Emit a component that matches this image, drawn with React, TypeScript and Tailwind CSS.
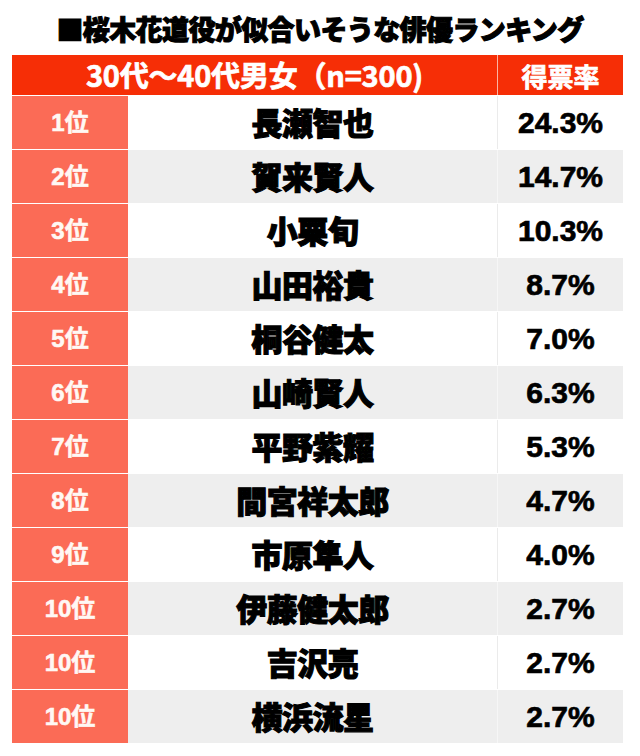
import React from "react";

const rows: [string, string, string][] = [
  ["1位", "長瀬智也", "24.3%"],
  ["2位", "賀来賢人", "14.7%"],
  ["3位", "小栗旬", "10.3%"],
  ["4位", "山田裕貴", "8.7%"],
  ["5位", "桐谷健太", "7.0%"],
  ["6位", "山崎賢人", "6.3%"],
  ["7位", "平野紫耀", "5.3%"],
  ["8位", "間宮祥太郎", "4.7%"],
  ["9位", "市原隼人", "4.0%"],
  ["10位", "伊藤健太郎", "2.7%"],
  ["10位", "吉沢亮", "2.7%"],
  ["10位", "横浜流星", "2.7%"],
];

const jp = "font-['Noto_Sans_CJK_JP','Noto_Sans_CJK_SC',sans-serif]";
const num = "font-['Liberation_Sans','Noto_Sans_CJK_JP',sans-serif]";

export default function App() {
  return (
    <div className="w-[640px] h-[756px] bg-white">
      <div className={`h-[55px] flex items-center justify-center pt-[3px] text-[27px] font-black text-black tracking-[-0.6px] [-webkit-text-stroke:1.1px_black] ${jp}`}>
        ■桜木花道役が似合いそうな俳優ランキング
      </div>
      <div className="mx-[12px] w-[611px] flex flex-col gap-[1px] bg-white">
        <div className="h-[40px] flex bg-[#f62e06]">
          <div className={`w-[485px] flex items-center justify-center text-white text-[29px] font-bold tracking-[-0.2px] [-webkit-text-stroke:0.7px_white] ${jp}`}>
            30代〜40代男女（n=300)
          </div>
          <div className={`flex-1 border-l border-[#fbb3a3] flex items-center justify-center text-white text-[26px] font-bold [-webkit-text-stroke:0.7px_white] ${jp}`}>
            得票率
          </div>
        </div>
        {rows.map(([rank, name, rate], i) => (
          <div key={i} className={`h-[53px] flex ${i % 2 === 1 ? "bg-[#eeeeee]" : "bg-white"}`}>
            <div className={`w-[116px] bg-[#fb6b56] flex items-center justify-center text-[#fff8f4] text-[24px] font-bold [-webkit-text-stroke:0.6px_#fff8f4] ${num}`}>
              {rank}
            </div>
            <div className={`w-[369px] flex items-center justify-center text-black text-[31px] font-black tracking-[-0.5px] [-webkit-text-stroke:1.1px_black] ${jp}`}>
              {name}
            </div>
            <div className={`flex-1 border-l ${i % 2 === 1 ? "border-[#f6f6f6]" : "border-[#ebebeb]"} flex items-center justify-center text-black text-[30px] font-bold [-webkit-text-stroke:0.7px_black] ${num}`}>
              {rate}
            </div>
          </div>
        ))}
      </div>
    </div>
  );
}
